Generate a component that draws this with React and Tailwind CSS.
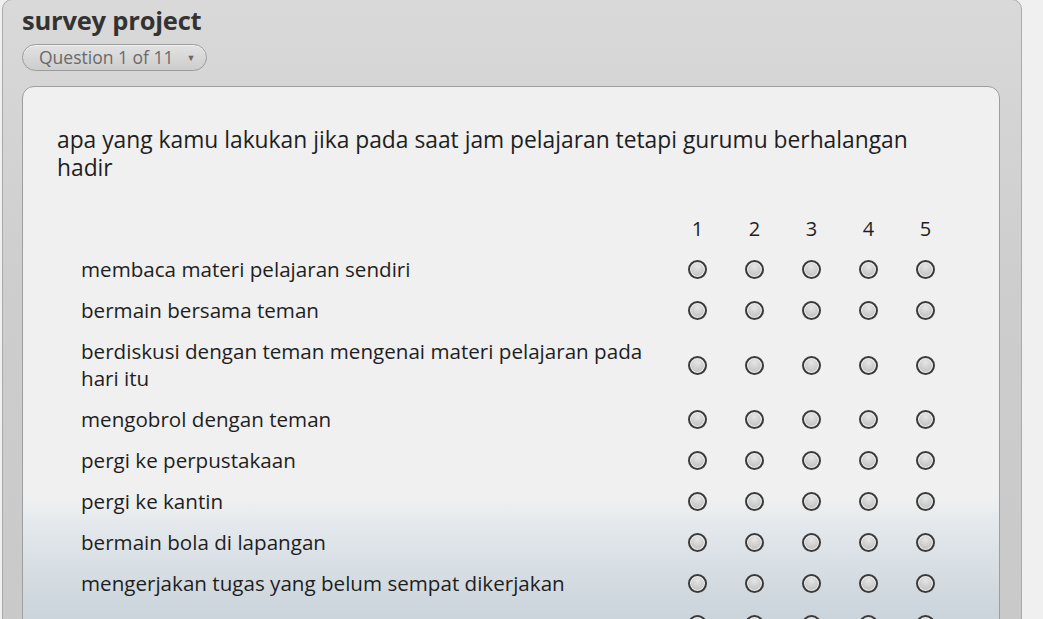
import React from "react";

const options = [1, 2, 3, 4, 5];

const rows = [
  "membaca materi pelajaran sendiri",
  "bermain bersama teman",
  "berdiskusi dengan teman mengenai materi pelajaran pada hari itu",
  "mengobrol dengan teman",
  "pergi ke perpustakaan",
  "pergi ke kantin",
  "bermain bola di lapangan",
  "mengerjakan tugas yang belum sempat dikerjakan",
  "",
];

function Radio() {
  return (
    <div className="w-[19px] h-[19px] rounded-full border-2 border-[#3a3a3a] bg-[radial-gradient(circle_at_50%_30%,#e6e6e6,#b6b6b6)] shadow-[inset_0_0_0_1px_#f4f4f4]" />
  );
}

function App() {
  return (
    <div
      className="bg-[#f0f0f0] overflow-hidden h-[619px]"
      style={{ fontFamily: '"Open Sans", "Noto Sans", sans-serif' }}
    >
      <div className="ml-[2px] w-[1020px] -mt-[1px] rounded-t-[10px] border border-[#a9a9a9] bg-[linear-gradient(to_bottom,#d9d9d9,#cdcdcd_300px,#c9c9c9)] px-[19px] pt-[5px] h-[640px]">
        <h1 className="text-[25.5px] font-bold text-[#333] leading-[30px] tracking-[-0.2px]">
          survey project
        </h1>
        <div className="mt-[9px] inline-flex items-center h-[27px] rounded-full border border-[#9c9c9c] bg-[linear-gradient(to_bottom,#e2e2e2,#cdcdcd)] pl-[16px] pr-[11px] shadow-[inset_0_1px_0_#f2f2f2]">
          <span className="text-[17.5px] text-[#6a6a6a] leading-none">
            Question 1 of 11
          </span>
          <span className="ml-[13px] text-[9px] text-[#6a6a6a] leading-none">
            ▼
          </span>
        </div>
        <div className="mt-[15px] w-[978px] rounded-[12px] border border-[#9e9e9e] bg-[linear-gradient(to_bottom,#f0f0f0_0px,#f0f0f0_410px,#e3e8ec_440px,#d2dae0_500px,#c6d0d8_560px)] pl-[34px] pr-[45px] pt-[39px] pb-[40px]">
          <p className="text-[22.8px] leading-[28px] text-[#1e1e1e] pr-[20px]">
            apa yang kamu lakukan jika pada saat jam pelajaran tetapi gurumu
            berhalangan hadir
          </p>
          <div className="mt-[26px] ml-[24px] grid grid-cols-[1fr_repeat(5,57px)]">
            <div />
            {options.map((n) => (
              <div
                key={n}
                className="h-[41px] flex items-center justify-center text-[20px] text-[#1e1e1e]"
              >
                {n}
              </div>
            ))}
            {rows.map((label, i) => (
              <React.Fragment key={i}>
                <div className="min-h-[41px] py-[7px] pr-[12px] text-[20.6px] leading-[27px] text-[#1e1e1e]">
                  {label}
                </div>
                {options.map((n) => (
                  <div key={n} className="flex items-center justify-center">
                    <Radio />
                  </div>
                ))}
              </React.Fragment>
            ))}
          </div>
        </div>
      </div>
    </div>
  );
}

export default App;
